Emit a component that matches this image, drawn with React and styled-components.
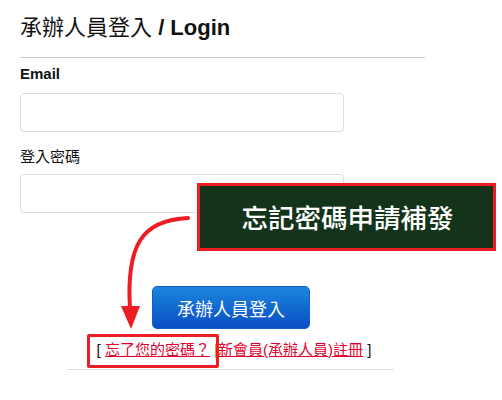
import React from "react";
import styled, { createGlobalStyle } from "styled-components";

const GlobalStyle = createGlobalStyle`
    body {
        margin: 0;
        background: #fff;
        font-family: "Liberation Sans", "Noto Sans CJK TC", sans-serif;
        color: #111;
    }
`;

const Page = styled.div`
    position: relative;
    width: 502px;
    height: 400px;
    padding: 13px 20px 0;
    box-sizing: border-box;
    overflow: hidden;
`;

const Title = styled.h2`
    margin: 0;
    font-size: 22px;
    line-height: 30px;
    font-weight: bold;
    color: #111;
`;

const TitleZh = styled.span`
    font-weight: normal;
`;

const Rule = styled.div`
    width: 405px;
    height: 1px;
    background: #ccc;
    margin-top: 14px;
`;

const Label = styled.div`
    font-size: 15px;
    line-height: 20px;
    font-weight: ${p => (p.bold ? "bold" : "normal")};
    margin-top: ${p => p.top}px;
`;

const Input = styled.input`
    display: block;
    box-sizing: border-box;
    width: 324px;
    height: 39px;
    margin-top: ${p => p.top}px;
    border: 1px solid #ddd;
    border-radius: 4px;
    background: #fff;
    outline: none;
`;

const Actions = styled.div`
    width: 420px;
    display: flex;
    flex-direction: column;
    align-items: center;
    margin-top: 73px;
`;

const LoginButton = styled.button`
    width: 158px;
    height: 43px;
    border: 1px solid #1060c8;
    border-radius: 5px;
    background: linear-gradient(#1a86dc, #0a4ec4);
    color: #fff;
    font-family: "Noto Sans CJK TC", sans-serif;
    font-size: 18px;
    margin-left: 2px;
`;

const LinkRow = styled.div`
    margin-top: 11px;
    font-size: 15px;
    line-height: 20px;
    color: #111;
    margin-left: 8px;
`;

const RedLink = styled.a`
    color: #e4002b;
    text-decoration: underline;
    margin: 0 ${p => p.gap || 0}px;
`;

const BottomRule = styled.div`
    width: 327px;
    height: 1px;
    background: #ddd;
    margin-top: 9px;
`;

const Callout = styled.div`
    position: absolute;
    left: 197px;
    top: 183px;
    width: 299px;
    height: 68px;
    box-sizing: border-box;
    border: 3px solid #ee1c25;
    background: #13341a;
    color: #fff;
    display: flex;
    align-items: center;
    justify-content: center;
    font-family: "Noto Sans CJK TC", sans-serif;
    font-size: 26.5px;
    font-weight: 500;
    padding: 0 0 2px 2px;
`;

const Highlight = styled.div`
    position: absolute;
    left: 87px;
    top: 334px;
    width: 132px;
    height: 34px;
    box-sizing: border-box;
    border: 3px solid #ee1c25;
    border-radius: 2px;
`;

const ArrowSvg = styled.svg`
    position: absolute;
    left: 0;
    top: 0;
`;

export default function App() {
    return (
        <Page>
            <GlobalStyle />
            <Title>
                <TitleZh>承辦人員登入</TitleZh> / Login
            </Title>
            <Rule />
            <Label bold top={6}>Email</Label>
            <Input top={9} />
            <Label top={15}>登入密碼</Label>
            <Input top={7} type="password" />

            <Actions>
                <LoginButton>承辦人員登入</LoginButton>
                <LinkRow>
                    [ <RedLink href="#">忘了您的密碼？</RedLink> |
                    <RedLink href="#">新會員(承辦人員)註冊</RedLink> ]
                </LinkRow>
                <BottomRule />
            </Actions>

            <Callout>忘記密碼申請補發</Callout>
            <Highlight />
            <ArrowSvg width="502" height="400">
                <path d="M188 218 C 142 220, 126 245, 130 309" fill="none" stroke="#ee1c25" strokeWidth="4" strokeLinecap="round" />
                <polygon points="121,306 140,306 131,329" fill="#ee1c25" />
            </ArrowSvg>
        </Page>
    );
}
